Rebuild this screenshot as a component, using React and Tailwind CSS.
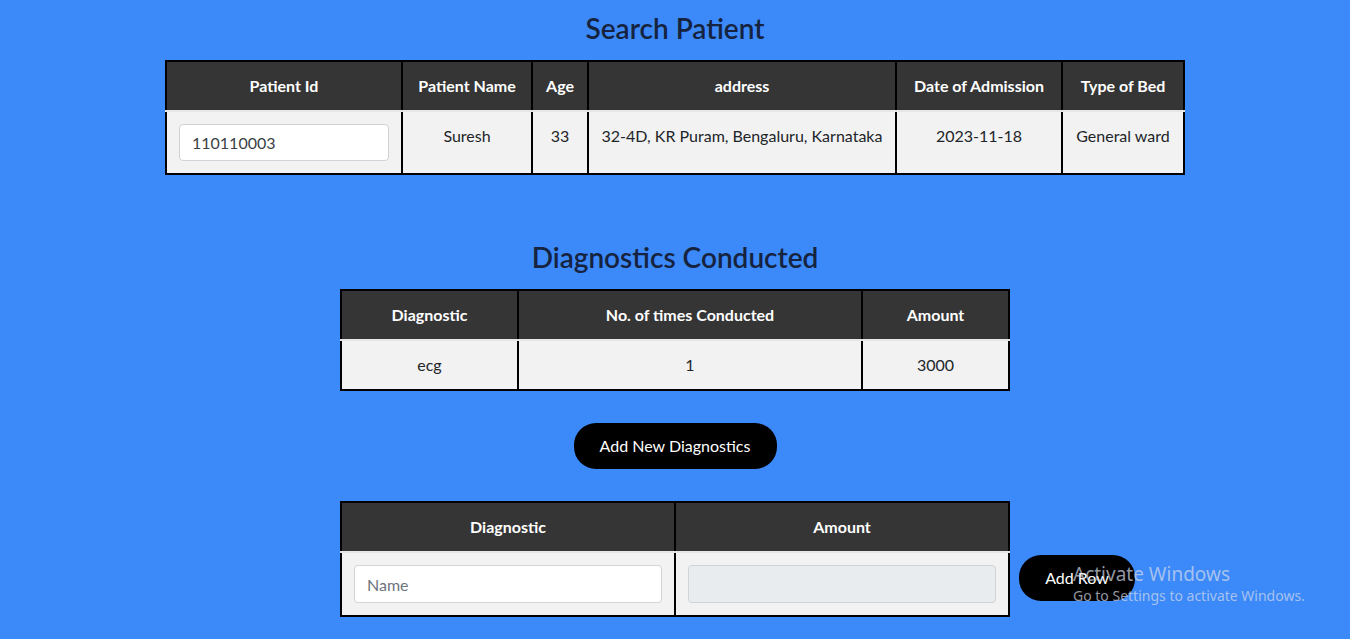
import React from 'react';

const font = { fontFamily: 'Lato, "Noto Sans", sans-serif' };

function HeadCell({ children, w }) {
  return (
    <th className={`${w} border-2 border-black border-b-[#e6e6e6] bg-[#353535] px-3 py-3 text-center text-base font-bold leading-6 text-white`}>
      {children}
    </th>
  );
}

function Cell({ children, w }) {
  return (
    <td className={`${w} border-2 border-black bg-[#f2f2f2] px-3 py-3 text-center align-top text-base leading-6 text-[#212529]`}>
      {children}
    </td>
  );
}

export default function App() {
  return (
    <div className="relative min-h-screen bg-[#3c89f9] pb-6" style={font}>
      {/* Search patient */}
      <h2 className="pt-2 text-center text-[28px] font-semibold leading-10 text-[#16233f]">Search Patient</h2>
      <table className="mx-auto mt-3 w-[1018px] table-fixed border-collapse">
        <thead>
          <tr>
            <HeadCell w="w-[236px]">Patient Id</HeadCell>
            <HeadCell w="w-[130px]">Patient Name</HeadCell>
            <HeadCell w="w-[56px]">Age</HeadCell>
            <HeadCell w="w-[308px]">address</HeadCell>
            <HeadCell w="w-[166px]">Date of Admission</HeadCell>
            <HeadCell w="w-[122px]">Type of Bed</HeadCell>
          </tr>
        </thead>
        <tbody>
          <tr>
            <td className="border-2 border-black bg-[#f2f2f2] px-3 py-3">
              <input
                defaultValue="110110003"
                className="h-[37px] w-full rounded border border-[#d0d4d8] bg-white px-3 text-base text-[#3a3f45] outline-none"
                style={font}
              />
            </td>
            <Cell>Suresh</Cell>
            <Cell>33</Cell>
            <Cell>32-4D, KR Puram, Bengaluru, Karnataka</Cell>
            <Cell>2023-11-18</Cell>
            <Cell>General ward</Cell>
          </tr>
        </tbody>
      </table>

      {/* Diagnostics conducted */}
      <h2 className="mt-[62px] text-center text-[28px] font-semibold leading-10 text-[#16233f]">Diagnostics Conducted</h2>
      <table className="mx-auto mt-3 w-[668px] table-fixed border-collapse">
        <thead>
          <tr>
            <HeadCell w="w-[177px]">Diagnostic</HeadCell>
            <HeadCell w="w-[344px]">No. of times Conducted</HeadCell>
            <HeadCell w="w-[147px]">Amount</HeadCell>
          </tr>
        </thead>
        <tbody>
          <tr>
            <Cell>ecg</Cell>
            <Cell>1</Cell>
            <Cell>3000</Cell>
          </tr>
        </tbody>
      </table>

      <div className="mt-8 flex justify-center">
        <button className="h-[46px] w-[203px] rounded-[22px] bg-black text-base text-white">Add New Diagnostics</button>
      </div>

      {/* New diagnostics */}
      <div className="mt-8 grid grid-cols-[1fr_auto_1fr]">
        <div />
        <table className="w-[668px] table-fixed border-collapse">
          <thead>
            <tr>
              <HeadCell w="w-[334px]">Diagnostic</HeadCell>
              <HeadCell w="w-[334px]">Amount</HeadCell>
            </tr>
          </thead>
          <tbody>
            <tr>
              <td className="border-2 border-black bg-[#f2f2f2] px-3 py-3">
                <input
                  placeholder="Name"
                  className="h-[38px] w-full rounded border border-[#d0d4d8] bg-white px-3 text-base text-[#3a3f45] outline-none placeholder:text-[#6c757d]"
                  style={font}
                />
              </td>
              <td className="border-2 border-black bg-[#f2f2f2] px-3 py-3">
                <input disabled className="h-[38px] w-full rounded border border-[#d0d4d8] bg-[#e9ecef] px-3" />
              </td>
            </tr>
          </tbody>
        </table>
        <div className="flex items-start pl-[9px] pt-[54px]">
          <button className="h-[46px] w-[116px] rounded-[22px] bg-black text-base text-white">Add Row</button>
        </div>
      </div>

      {/* Windows watermark */}
      <div className="pointer-events-none absolute left-[1073px] top-[562px] text-[#d5dcea]/70" style={{ fontFamily: '"Noto Sans", sans-serif' }}>
        <div className="text-[19px] leading-[25px]">Activate Windows</div>
        <div className="text-[14px] leading-[18px]">Go to Settings to activate Windows.</div>
      </div>
    </div>
  );
}
